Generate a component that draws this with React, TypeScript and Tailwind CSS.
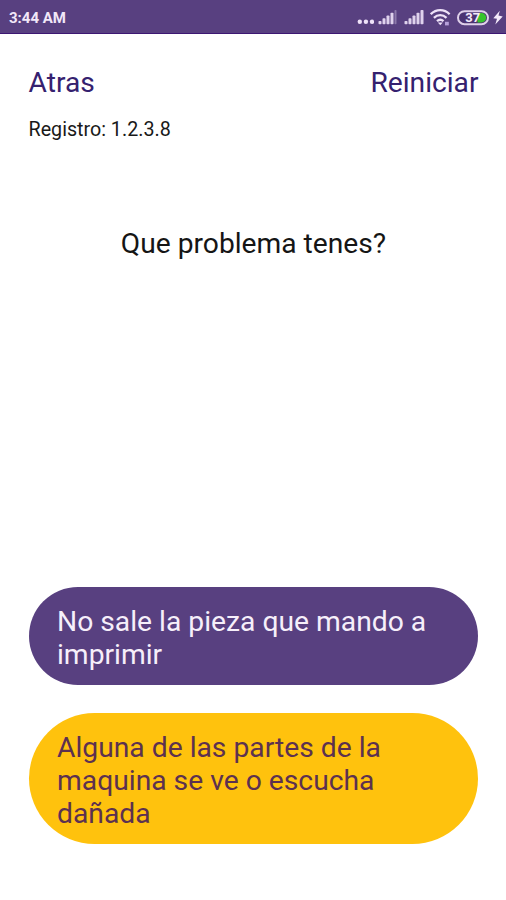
const signal = [0, 1, 2, 3, 4];

function Dots() {
  return (
    <svg width="17" height="24" viewBox="0 0 17 24" fill="#eee2f8">
      <circle cx="2.8" cy="15.8" r="2.2" />
      <circle cx="8.9" cy="15.8" r="2.2" />
      <circle cx="15" cy="15.8" r="2.2" />
    </svg>
  );
}

function Signal({ active }: { active: number }) {
  return (
    <svg width="20" height="24" viewBox="0 0 20 24">
      {signal.map((i) => (
        <rect
          key={i}
          x={0.5 + i * 4}
          y={15 - i * 2.75}
          width={i < active ? 3 : 2}
          height={3.3 + i * 2.75}
          rx="0.8"
          fill="#eee2f8"
          opacity={i < active ? 0.9 : 0.35}
        />
      ))}
    </svg>
  );
}

function Wifi() {
  return (
    <svg width="21" height="24" viewBox="0 0 21 24" fill="none" stroke="#eee2f8" strokeWidth="2.3">
      <path d="M0.8 8.2C6.2 2.8 14.2 2.8 19.6 8.2" />
      <path d="M3.9 11.8C7.6 8.3 12.8 8.3 16.5 11.8" />
      <path d="M7 15.2C9 13.4 11.5 13.4 13.5 15.2" />
      <path d="M7.8 16.4h5L10.3 19.2z" fill="#eee2f8" stroke="none" />
      <path d="M15 15.8h3.8v3.6H15z" fill="#b6a0da" stroke="none" />
    </svg>
  );
}

function Battery() {
  return (
    <svg width="32" height="24" viewBox="0 0 32 24">
      <rect x="1" y="5.2" width="30" height="13" rx="6.5" fill="#4b3372" stroke="#dfd1ea" strokeWidth="2" />
      <path d="M20.5 7h4a4.7 4.7 0 0 1 0 9.4h-4z" fill="#36c42d" />
      <text
        x="15.8"
        y="16.2"
        textAnchor="middle"
        fill="#f4eafa"
        fontSize="13"
        fontWeight="700"
        fontFamily="Roboto, sans-serif"
      >
        37
      </text>
    </svg>
  );
}

function Bolt() {
  return (
    <svg width="10" height="24" viewBox="0 0 10 24" fill="#f4eafa">
      <path d="M6.8 4.8L.3 12.2l3.7.6-1.7 5.6 7.4-8-4.2-.8z" />
    </svg>
  );
}

export default function App() {
  return (
    <div className="flex h-[900px] w-[506px] flex-col bg-white font-['Roboto',sans-serif]">
      <header className="flex h-[34px] shrink-0 items-center justify-between border-b border-[#3c1773] bg-[#584080] pr-[3px] pl-[9px] pt-[2px] text-[#f1e7f8]">
        <span className="pt-[2px] text-[15px] leading-none font-bold">3:44 AM</span>
        <div className="flex items-center">
          <Dots />
          <div className="ml-[4px]"><Signal active={4} /></div>
          <div className="ml-[6px]"><Signal active={5} /></div>
          <div className="ml-[6px]"><Wifi /></div>
          <div className="ml-[6px]"><Battery /></div>
          <div className="ml-[4px]"><Bolt /></div>
        </div>
      </header>

      <main className="flex flex-1 flex-col px-[28.5px] pt-[32px] pb-[56px]">
        <nav className="flex justify-between text-[28.2px] leading-[33px] text-[#35216f]">
          <button>Atras</button>
          <button className="-mr-[1px]">Reiniciar</button>
        </nav>
        <p className="mt-[19px] text-[19.7px] leading-[23px] text-[#191919]">Registro: 1.2.3.8</p>
        <h1 className="mt-[86px] pl-[1px] text-center text-[28.2px] leading-[33px] font-normal text-[#151515]">
          Que problema tenes?
        </h1>
        <div className="mt-auto -mr-[0.5px] flex flex-col gap-[28.5px] text-[28.25px] leading-[33px]">
          <button className="rounded-full bg-[#584080] px-[28.5px] pt-[18px] pb-[13.5px] text-left text-[#f6effa]">
            No sale la pieza que mando a<br />imprimir
          </button>
          <button className="rounded-full bg-[#ffc20d] px-[28.5px] pt-[18px] pb-[14px] text-left text-[#5c3150]">
            Alguna de las partes de la<br />maquina se ve o escucha<br />dañada
          </button>
        </div>
      </main>
    </div>
  );
}
